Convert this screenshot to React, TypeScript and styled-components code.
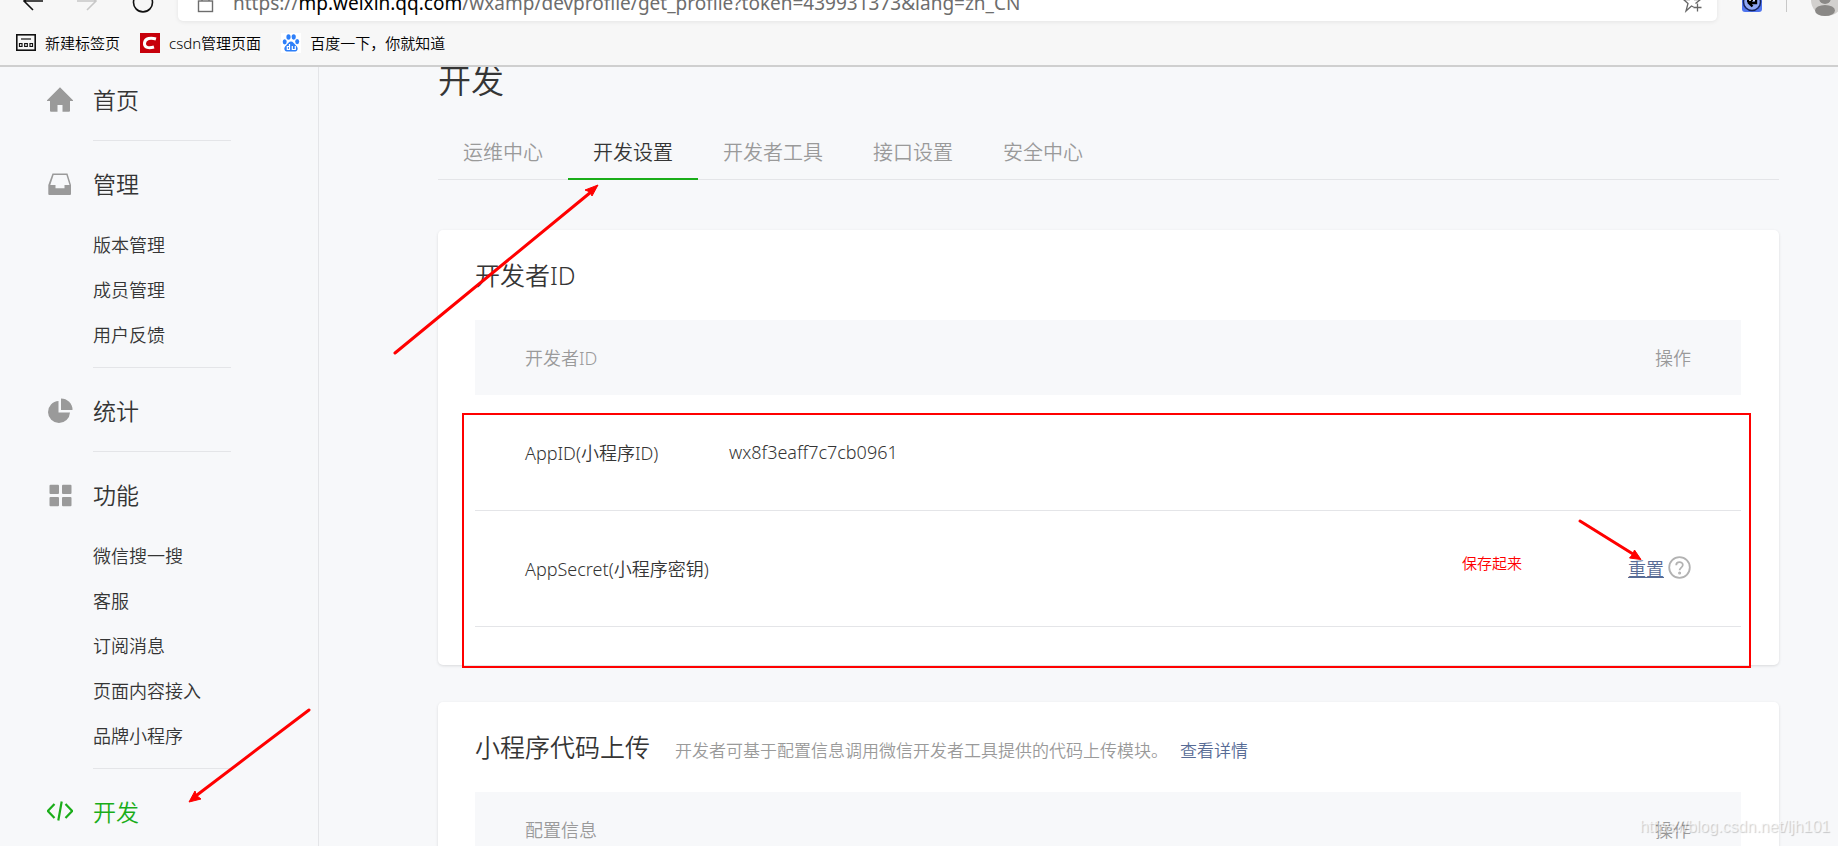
import React from 'react';
import styled, { createGlobalStyle, css } from 'styled-components';

const GlobalStyle = createGlobalStyle`
  *, *::before, *::after { box-sizing: border-box; }
  body {
    margin: 0;
    background: #f7f8fa;
    color: #353535;
    font-family: "Noto Sans", "Noto Sans CJK SC", sans-serif;
    font-weight: 350;
    font-size: 18px;
  }
  h1, h2, p, ul { margin: 0; padding: 0; font-weight: 350; }
  ul { list-style: none; }
  a { color: inherit; text-decoration: none; }
  button { flex: none; font: inherit; border: 0; padding: 0; background: none; cursor: pointer; }
  svg { display: block; flex: none; }
`;

const Screen = styled.div`
  position: relative;
  display: flex;
  flex-direction: column;
  height: 100vh;
  overflow: hidden;
`;

/* ---------- browser chrome ---------- */

const Chrome = styled.header`
  flex: none;
  overflow: hidden;
  background: #f7f7f7;
  border-bottom: 2px solid #cfcfcf;
  color: #000;
`;

const Toolbar = styled.div`
  display: flex;
  align-items: center;
  height: 36px;
  margin-top: -15px;
  padding-left: 22px;
`;

const NavButtons = styled.div`
  display: flex;
  gap: 34px;
  width: 156px;
`;

const ToolButton = styled.button<{ $muted?: boolean }>`
  color: ${(p) => (p.$muted ? '#c8c8c8' : '#111')};
`;

const AddressBar = styled.div`
  flex: 1;
  min-width: 0;
  display: flex;
  align-items: center;
  height: 36px;
  padding: 0 14px 0 19px;
  border-radius: 5px;
  background: #fff;
  box-shadow: 0 1px 4px rgba(0, 0, 0, 0.08);
  color: #6d6d6d;
`;

const Url = styled.span`
  flex: 1;
  margin-left: 19px;
  overflow: hidden;
  white-space: nowrap;
  font-family: "Noto Sans", sans-serif;
  font-weight: 400;
  font-size: 19px;
  line-height: 34px;
`;

const Host = styled.span`
  color: #000;
`;

const ToolbarEnd = styled.div`
  display: flex;
  align-items: center;
  gap: 24px;
  width: 121px;
  padding-left: 25px;
`;

const ToolbarRule = styled.span`
  flex: none;
  width: 1px;
  height: 18px;
  background: #c8c8c8;
`;

const Bookmarks = styled.nav`
  display: flex;
  align-items: center;
  gap: 20px;
  height: 44px;
  padding: 0 0 1px 16px;
`;

const Bookmark = styled.a`
  display: flex;
  align-items: center;
  gap: 9px;
  font-size: 15px;
  line-height: 20px;
`;

/* ---------- page frame ---------- */

const Page = styled.div`
  flex: 1;
  min-height: 0;
  display: flex;
  overflow: hidden;
`;

const Sidebar = styled.nav`
  position: relative;
  flex: none;
  width: 319px;
  border-right: 1px solid #e4e5e8;
`;

const MenuSection = styled.section`
  & + & {
    padding-top: 10px;
  }
`;

const MenuRule = styled.hr`
  width: 138px;
  height: 1px;
  margin: 0 0 0 93px;
  border: 0;
  background: #e4e5e8;
`;

const MenuHeading = styled.a<{ $active?: boolean }>`
  display: flex;
  align-items: center;
  gap: 20px;
  padding: 17px 0 24px 47px;
  font-size: 23px;
  line-height: 32px;
  color: ${(p) => (p.$active ? '#1aad19' : '#353535')};

  svg {
    color: ${(p) => (p.$active ? '#1aad19' : '#9a9a9a')};
  }
`;

const SubMenu = styled.ul`
  padding: 0 0 8px 93px;
`;

const SubItem = styled.a`
  display: block;
  padding-bottom: 2px;
  font-size: 18px;
  line-height: 43px;
`;

const Main = styled.main`
  flex: 1;
  min-width: 0;
  padding: 0 59px 0 119px;
`;

const Title = styled.h1`
  font-size: 33px;
  line-height: 28px;
`;

const Tabs = styled.ul`
  display: flex;
  margin: 29px 0 50px;
  box-shadow: inset 0 -1px #e4e5e8;
`;

const Tab = styled.a<{ $active?: boolean }>`
  display: block;
  height: 56px;
  padding: 0 25px;
  font-size: 20px;
  line-height: 58px;
  color: #9a9a9a;
  ${(p) =>
    p.$active &&
    css`
      color: #353535;
      box-shadow: inset 0 -2px #1aad19;
    `}
`;

const Card = styled.section`
  position: relative;
  margin-bottom: 37px;
  padding: 30px 38px 38px 37px;
  border-radius: 5px;
  background: #fff;
  box-shadow: 0 1px 3px rgba(0, 0, 0, 0.12);
`;

const CardHead = styled.div`
  display: flex;
  align-items: baseline;
  gap: 25px;
  height: 30px;
  margin-bottom: 30px;
`;

const CardTitle = styled.h2`
  font-size: 25px;
  line-height: 30px;
`;

const CardHint = styled.p`
  font-size: 17px;
  line-height: 24px;
  color: #9a9a9a;
`;

const HintLink = styled.a`
  margin-left: 12px;
  color: #576b95;
`;

const Table = styled.table`
  width: 100%;
  table-layout: fixed;
  border-spacing: 0;
  font-size: 18px;
`;

const NameColumn = styled.col`
  width: 254px;
`;

const ActionColumn = styled.col`
  width: 200px;
`;

const HeadCell = styled.th<{ $end?: boolean }>`
  height: 75px;
  padding: 0 50px 2px;
  background: #f7f8fa;
  font-weight: 350;
  text-align: ${(p) => (p.$end ? 'right' : 'left')};
  color: #9a9a9a;
`;

const Cell = styled.td`
  height: 116px;
  padding: 0 0 2px;
  border-bottom: 1px solid #e4e5e8;
  white-space: nowrap;

  &:first-child {
    padding-left: 50px;
  }
  &:last-child {
    padding-right: 50px;
  }
`;

const Actions = styled.div`
  display: flex;
  align-items: center;
  justify-content: flex-end;
  gap: 4px;
`;

const ResetLink = styled.a`
  color: #576b95;
  text-decoration: underline;
  text-underline-offset: 1px;
  text-decoration-thickness: 1px;
`;

/* ---------- red annotations ---------- */

const Frame = styled.div`
  position: absolute;
  inset: 183px 28px -3px 24px;
  border: 2px solid #f00;
  pointer-events: none;
`;

const Note = styled.span`
  position: absolute;
  top: 323px;
  right: 257px;
  font-size: 15px;
  line-height: 20px;
  color: #f00;
`;

const Arrow = styled.svg<{ $top: number; $left?: number; $right?: number }>`
  position: absolute;
  top: ${(p) => p.$top}px;
  ${(p) => (p.$left !== undefined ? `left: ${p.$left}px;` : `right: ${p.$right}px;`)}
  color: #f00;
  pointer-events: none;
`;

const Watermark = styled.span`
  position: absolute;
  right: 8px;
  bottom: 9px;
  font-family: "Liberation Sans", sans-serif;
  font-weight: 400;
  font-size: 16px;
  line-height: 20px;
  color: rgba(255, 255, 255, 0.6);
  text-shadow: 1px 1px 1px rgba(0, 0, 0, 0.2);
`;

/* ---------- icons ---------- */

const BackIcon = () => (
  <svg width="21" height="22" viewBox="0 0 21 22" fill="none" stroke="currentColor" strokeWidth="1.6">
    <path d="M21 9H2M11 0 2 9l9 9" />
  </svg>
);

const ForwardIcon = () => (
  <svg width="21" height="22" viewBox="0 0 21 22" fill="none" stroke="currentColor" strokeWidth="1.6">
    <path d="M0 9h19M10 0l9 9-9 9" />
  </svg>
);

const ReloadIcon = () => (
  <svg width="22" height="22" viewBox="0 0 22 22" fill="none" stroke="currentColor" strokeWidth="1.6">
    <path d="M17 3a9.500 9.500 0 1 1-12 0M17 0v4h-4" />
  </svg>
);

const LockIcon = () => (
  <svg width="17" height="20" viewBox="0 0 17 20" fill="none" stroke="#6d6d6d" strokeWidth="1.4">
    <rect x="1.500" y="8" width="14" height="10.500" />
    <path d="M5 8V4.500a3.500 3.500 0 0 1 7 0V8" />
  </svg>
);

const StarIcon = () => (
  <svg width="20" height="20" viewBox="0 0 20 20" fill="none" stroke="#666" strokeWidth="1.3">
    <path d="M10.500 14 8.500 13 3 18l2-7.500L0.500 6.500h6L9 0l2.500 6.500h6L12.500 10.500M14.500 10.500v8M10.500 14.500h8" />
  </svg>
);

const ExtensionIcon = () => (
  <svg width="20" height="22" viewBox="0 0 20 22">
    <rect width="20" height="20" rx="3" fill="#4f74ee" />
    <circle cx="10" cy="10" r="8.500" fill="#8fa8f5" stroke="#16245c" strokeWidth="1.500" />
    <path d="M5 9h3M14 6v5H8M10.500 7.500 7 11l3.500 3.500" fill="none" stroke="#000" strokeWidth="2.400" />
    <path d="M5 6h3v3M11 8h2" fill="none" stroke="#fff" strokeWidth="1.500" />
  </svg>
);

const AvatarIcon = () => (
  <svg width="32" height="32" viewBox="0 0 32 32">
    <circle cx="16" cy="13" r="16" fill="#d2d0ce" />
    <circle cx="14" cy="11" r="6" fill="#8a8886" />
    <ellipse cx="14" cy="23.500" rx="10" ry="5.500" fill="#8a8886" />
  </svg>
);

const NewTabIcon = () => (
  <svg width="20" height="17" viewBox="0 0 20 17" fill="none" stroke="#111">
    <rect x="0.800" y="0.800" width="18.400" height="15.400" strokeWidth="1.600" />
    <path d="M5 5h10" strokeWidth="1.200" />
    <path d="M3.500 9.500h2.500v3H3.500zM8.700 9.500h2.600v3H8.700zM14 9.500h2.500v3H14z" strokeWidth="1.200" />
  </svg>
);

const CsdnIcon = () => (
  <svg width="20" height="20" viewBox="0 0 20 20">
    <rect width="20" height="20" fill="#c7000b" />
    <path d="M16 6C11 4.500 5 5 4.500 10s4.500 5.500 9.500 4" fill="none" stroke="#fff" strokeWidth="3" />
  </svg>
);

const BaiduIcon = () => (
  <svg width="20" height="20" viewBox="0 0 20 20">
    <rect width="20" height="20" fill="#fff" />
    <g fill="#2d7ff9">
      <ellipse cx="7.500" cy="4" rx="2.100" ry="2.800" />
      <ellipse cx="12.700" cy="4" rx="2.100" ry="2.700" />
      <ellipse cx="3.700" cy="8.800" rx="2" ry="2.600" />
      <ellipse cx="16.200" cy="8.600" rx="2" ry="2.600" />
      <path d="M10 8.500c2 0 3 2 4.500 3.500 2 2 2.500 3 2 4.800-.6 2-3 2-6.500 1.600-3.500.4-5.900.4-6.500-1.600-.5-1.800 0-2.800 2-4.800C7 10.500 8 8.500 10 8.500z" />
    </g>
    <path d="M8.500 11v5.500H6.300v-3h2M11.300 13v3.500h3V13" fill="none" stroke="#fff" strokeWidth="1.200" />
  </svg>
);

const HomeIcon = () => (
  <svg width="26" height="26" viewBox="0 0 26 26" fill="currentColor">
    <path d="M13 0.300 26 13.300v.7h-3v9.800a1 1 0 0 1-1 1h-6.500V18h-5v6.800H4a1 1 0 0 1-1-1V14H0v-.7z" />
  </svg>
);

const InboxIcon = () => (
  <svg width="26" height="26" viewBox="0 0 26 26" fill="currentColor">
    <path
      fillRule="evenodd"
      d="M5.500 2.500h15L24 14v9a1 1 0 0 1-1 1H2.300a1 1 0 0 1-1-1v-9zM6.600 4 3.300 14H8.500v3.300h9V14h5L19.400 4z"
    />
  </svg>
);

const PieIcon = () => (
  <svg width="26" height="26" viewBox="0 0 26 26" fill="currentColor">
    <path d="M11.500 3v11.500H23A11 11 0 1 1 11.500 3z" />
    <path d="M14 0.500A11.500 11.500 0 0 1 25.500 12H14z" />
  </svg>
);

const GridIcon = () => (
  <svg width="26" height="26" viewBox="0 0 26 26" fill="currentColor">
    <rect x="2.500" y="2.700" width="9.500" height="9.300" rx="1" />
    <rect x="15" y="2.700" width="9.500" height="9.300" rx="1" />
    <rect x="2.500" y="15" width="9.500" height="9.300" rx="1" />
    <rect x="15" y="15" width="9.500" height="9.300" rx="1" />
  </svg>
);

const CodeIcon = () => (
  <svg width="26" height="26" viewBox="0 0 26 26" fill="none" stroke="currentColor" strokeWidth="2.200">
    <path d="M7.500 5 0.800 12l6.700 7M18.500 5l6.700 7-6.700 7M14.700 2.500 11.300 21.500" />
  </svg>
);

const HelpIcon = () => (
  <svg width="23" height="24" viewBox="0 0 23 24" fill="none" stroke="#b2b2b2" strokeWidth="1.800">
    <circle cx="11.500" cy="11.500" r="10.300" />
    <path d="M8.200 9.300c0-4.200 6.800-4 6.600-.3-.1 2.500-3.200 2.700-3.200 5.300" />
    <circle cx="11.600" cy="17" r="0.600" />
  </svg>
);

/* ---------- data ---------- */

const menu = [
  { label: '首页', icon: <HomeIcon />, items: [] },
  { label: '管理', icon: <InboxIcon />, items: ['版本管理', '成员管理', '用户反馈'] },
  { label: '统计', icon: <PieIcon />, items: [] },
  { label: '功能', icon: <GridIcon />, items: ['微信搜一搜', '客服', '订阅消息', '页面内容接入', '品牌小程序'] },
  { label: '开发', icon: <CodeIcon />, items: [], active: true },
];

const tabs = ['运维中心', '开发设置', '开发者工具', '接口设置', '安全中心'];

export default function App() {
  return (
    <Screen>
      <GlobalStyle />
      <Chrome>
        <Toolbar>
          <NavButtons>
            <ToolButton aria-label="后退"><BackIcon /></ToolButton>
            <ToolButton aria-label="前进" $muted><ForwardIcon /></ToolButton>
            <ToolButton aria-label="刷新"><ReloadIcon /></ToolButton>
          </NavButtons>
          <AddressBar>
            <LockIcon />
            <Url>
              https://<Host>mp.weixin.qq.com</Host>/wxamp/devprofile/get_profile?token=439931373&amp;lang=zh_CN
            </Url>
            <ToolButton aria-label="收藏"><StarIcon /></ToolButton>
          </AddressBar>
          <ToolbarEnd>
            <ToolButton aria-label="扩展"><ExtensionIcon /></ToolButton>
            <ToolbarRule />
            <ToolButton aria-label="用户"><AvatarIcon /></ToolButton>
          </ToolbarEnd>
        </Toolbar>
        <Bookmarks>
          <Bookmark href="#"><NewTabIcon />新建标签页</Bookmark>
          <Bookmark href="#"><CsdnIcon />csdn管理页面</Bookmark>
          <Bookmark href="#"><BaiduIcon />百度一下，你就知道</Bookmark>
        </Bookmarks>
      </Chrome>

      <Page>
        <Sidebar>
          {menu.map((section, i) => (
            <MenuSection key={section.label}>
              <MenuHeading href="#" $active={section.active}>
                {section.icon}
                {section.label}
              </MenuHeading>
              {section.items.length > 0 && (
                <SubMenu>
                  {section.items.map((item) => (
                    <li key={item}><SubItem href="#">{item}</SubItem></li>
                  ))}
                </SubMenu>
              )}
              {i < menu.length - 1 && <MenuRule />}
            </MenuSection>
          ))}
          <Arrow $top={639} $left={185} width="130" height="100" viewBox="0 0 130 100">
            <path d="M124 4 12 89" stroke="currentColor" strokeWidth="3" strokeLinecap="round" />
            <path d="M4 96 10 85l1.500 4.500L16 93z" fill="currentColor" stroke="currentColor" />
          </Arrow>
        </Sidebar>

        <Main>
          <Title>开发</Title>
          <Tabs>
            {tabs.map((tab) => (
              <li key={tab}><Tab href="#" $active={tab === '开发设置'}>{tab}</Tab></li>
            ))}
          </Tabs>

          <Card>
            <CardHead><CardTitle>开发者ID</CardTitle></CardHead>
            <Table>
              <colgroup>
                <NameColumn />
                <col />
                <ActionColumn />
              </colgroup>
              <thead>
                <tr>
                  <HeadCell colSpan={2}>开发者ID</HeadCell>
                  <HeadCell $end>操作</HeadCell>
                </tr>
              </thead>
              <tbody>
                <tr>
                  <Cell>AppID(小程序ID)</Cell>
                  <Cell>wx8f3eaff7c7cb0961</Cell>
                  <Cell />
                </tr>
                <tr>
                  <Cell>AppSecret(小程序密钥)</Cell>
                  <Cell />
                  <Cell>
                    <Actions>
                      <ResetLink href="#">重置</ResetLink>
                      <HelpIcon />
                    </Actions>
                  </Cell>
                </tr>
              </tbody>
            </Table>
            <Frame />
            <Note>保存起来</Note>
            <Arrow $top={-50} $left={-48} width="214" height="180" viewBox="0 0 214 180">
              <path d="M5 173 201 12" stroke="currentColor" strokeWidth="3" strokeLinecap="round" />
              <path d="M208 5 202 16l-2-4-5-2z" fill="currentColor" stroke="currentColor" />
            </Arrow>
            <Arrow $top={286} $right={132} width="72" height="50" viewBox="0 0 72 50">
              <path d="M5 5 58 38" stroke="currentColor" strokeWidth="3" strokeLinecap="round" />
              <path d="M66 43.500 54.500 42l3-3.500L59.500 34z" fill="currentColor" stroke="currentColor" />
            </Arrow>
          </Card>

          <Card>
            <CardHead>
              <CardTitle>小程序代码上传</CardTitle>
              <CardHint>
                开发者可基于配置信息调用微信开发者工具提供的代码上传模块。<HintLink href="#">查看详情</HintLink>
              </CardHint>
            </CardHead>
            <Table>
              <thead>
                <tr>
                  <HeadCell>配置信息</HeadCell>
                  <HeadCell $end>操作</HeadCell>
                </tr>
              </thead>
            </Table>
          </Card>
        </Main>
      </Page>
      <Watermark>https://blog.csdn.net/ljh101</Watermark>
    </Screen>
  );
}
